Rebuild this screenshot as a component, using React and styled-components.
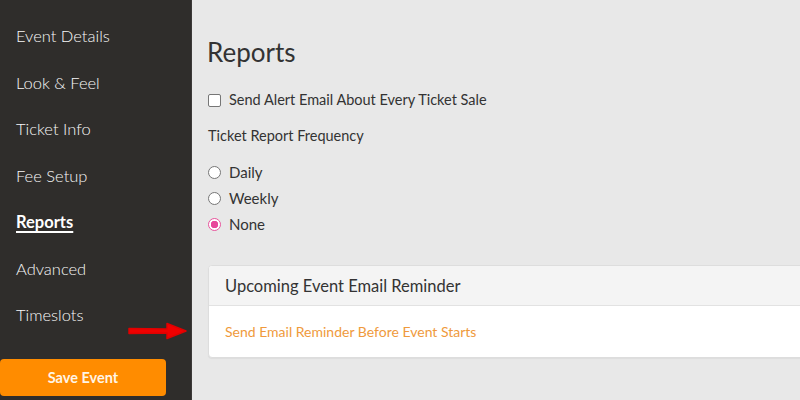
import React from "react";
import styled, { createGlobalStyle } from "styled-components";

const GlobalStyle = createGlobalStyle`
    html, body {
        margin: 0;
        padding: 0;
        height: 100%;
        overflow: hidden;
    }
    body {
        font-family: Lato, "Open Sans", sans-serif;
        background: #e8e8e8;
    }
`;

const navItems = [
    "Event Details",
    "Look & Feel",
    "Ticket Info",
    "Fee Setup",
    "Reports",
    "Advanced",
    "Timeslots",
];

const frequencies = ["Daily", "Weekly", "None"];

const App = () => {
    return (
        <>
            <GlobalStyle />
            <Layout>
                <Sidebar>
                    <Nav>
                        {navItems.map((item) => (
                            <NavItem key={item} $active={item === "Reports"}>
                                {item}
                            </NavItem>
                        ))}
                    </Nav>
                    <SaveButton>Save Event</SaveButton>
                    <Arrow width="62" height="18" viewBox="0 0 62 18">
                        <path
                            d="M3 6.5 L41 7 L41 1.5 L60 9 L41 16.5 L41 11 L3 11.5 Z"
                            fill="#f00000"
                            stroke="#e00000"
                            strokeWidth="1.5"
                            strokeLinejoin="round"
                        />
                    </Arrow>
                </Sidebar>
                <Main>
                    <Title>Reports</Title>
                    <CheckRow>
                        <Checkbox type="checkbox" />
                        <span>Send Alert Email About Every Ticket Sale</span>
                    </CheckRow>
                    <FieldLabel>Ticket Report Frequency</FieldLabel>
                    <RadioList>
                        {frequencies.map((f) => (
                            <RadioRow key={f}>
                                <Radio $checked={f === "None"} />
                                <span>{f}</span>
                            </RadioRow>
                        ))}
                    </RadioList>
                    <Panel>
                        <PanelHeader>Upcoming Event Email Reminder</PanelHeader>
                        <PanelBody>
                            <PanelLink>Send Email Reminder Before Event Starts</PanelLink>
                        </PanelBody>
                    </Panel>
                </Main>
            </Layout>
        </>
    );
};

const Layout = styled.div`
    display: flex;
    width: 800px;
    height: 400px;
`;

const Sidebar = styled.aside`
    position: relative;
    width: 191px;
    flex-shrink: 0;
    background: #2f2d2b;
    border-right: 1px solid #3c3a38;
    display: flex;
    flex-direction: column;
`;

const Nav = styled.nav`
    display: flex;
    flex-direction: column;
    padding-top: 13px;
`;

const NavItem = styled.a`
    display: block;
    padding: 12px 16px;
    font-size: 16.5px;
    line-height: 22.5px;
    color: ${(p) => (p.$active ? "#ffffff" : "#f7f7f7")};
    font-weight: ${(p) => (p.$active ? 700 : 300)};
    text-decoration: ${(p) => (p.$active ? "underline" : "none")};
    text-underline-offset: 3px;
    text-decoration-thickness: 1.5px;
`;

const SaveButton = styled.button`
    margin-top: 20px;
    width: 166px;
    height: 37px;
    border: none;
    border-radius: 4px;
    background: #ff8c00;
    color: #fff5e6;
    font-family: Lato, sans-serif;
    font-size: 14.5px;
    font-weight: 700;
    cursor: pointer;
`;

const Arrow = styled.svg`
    position: absolute;
    left: 126px;
    top: 322px;
`;

const Main = styled.main`
    flex: 1;
    padding: 35px 0 0 15px;
    color: #333333;
    overflow: hidden;
`;

const Title = styled.h1`
    margin: 0 0 21px;
    font-size: 26px;
    font-weight: 400;
    line-height: 34px;
    color: #333;
`;

const CheckRow = styled.label`
    display: flex;
    align-items: center;
    gap: 8px;
    padding-left: 1px;
    font-size: 14.5px;
    line-height: 20px;
    color: #333;
`;

const Checkbox = styled.input`
    appearance: none;
    width: 13px;
    height: 13px;
    margin: 0;
    border: 1px solid #767676;
    border-radius: 2px;
    background: #fff;
`;

const FieldLabel = styled.div`
    margin-top: 16px;
    padding-left: 1px;
    font-size: 14.5px;
    line-height: 20px;
    color: #333;
`;

const RadioList = styled.div`
    display: flex;
    flex-direction: column;
    gap: 6px;
    margin-top: 16px;
    padding-left: 1px;
`;

const RadioRow = styled.label`
    display: flex;
    align-items: center;
    gap: 8px;
    font-size: 15px;
    line-height: 20px;
    color: #333;
`;

const Radio = styled.span`
    box-sizing: border-box;
    width: 13px;
    height: 13px;
    border-radius: 50%;
    border: 1px solid ${(p) => (p.$checked ? "#e8559d" : "#767676")};
    background: ${(p) =>
        p.$checked
            ? "radial-gradient(circle, #e8479a 0 3.5px, #fff 4px)"
            : "#fff"};
`;

const Panel = styled.section`
    margin-top: 31px;
    margin-left: 1px;
    width: 620px;
    background: #fff;
    border: 1px solid #dddddd;
    border-radius: 4px;
    box-shadow: 0 1px 1px rgba(0, 0, 0, 0.05);
    overflow: hidden;
`;

const PanelHeader = styled.div`
    padding: 0 16px;
    height: 39px;
    display: flex;
    align-items: center;
    background: #f4f4f4;
    border-bottom: 1px solid #e2e2e2;
    font-size: 16.5px;
    color: #333;
`;

const PanelBody = styled.div`
    height: 51px;
    padding: 0 16px;
    display: flex;
    align-items: center;
`;

const PanelLink = styled.a`
    font-size: 14px;
    color: #ef9a3c;
`;

export default App;
